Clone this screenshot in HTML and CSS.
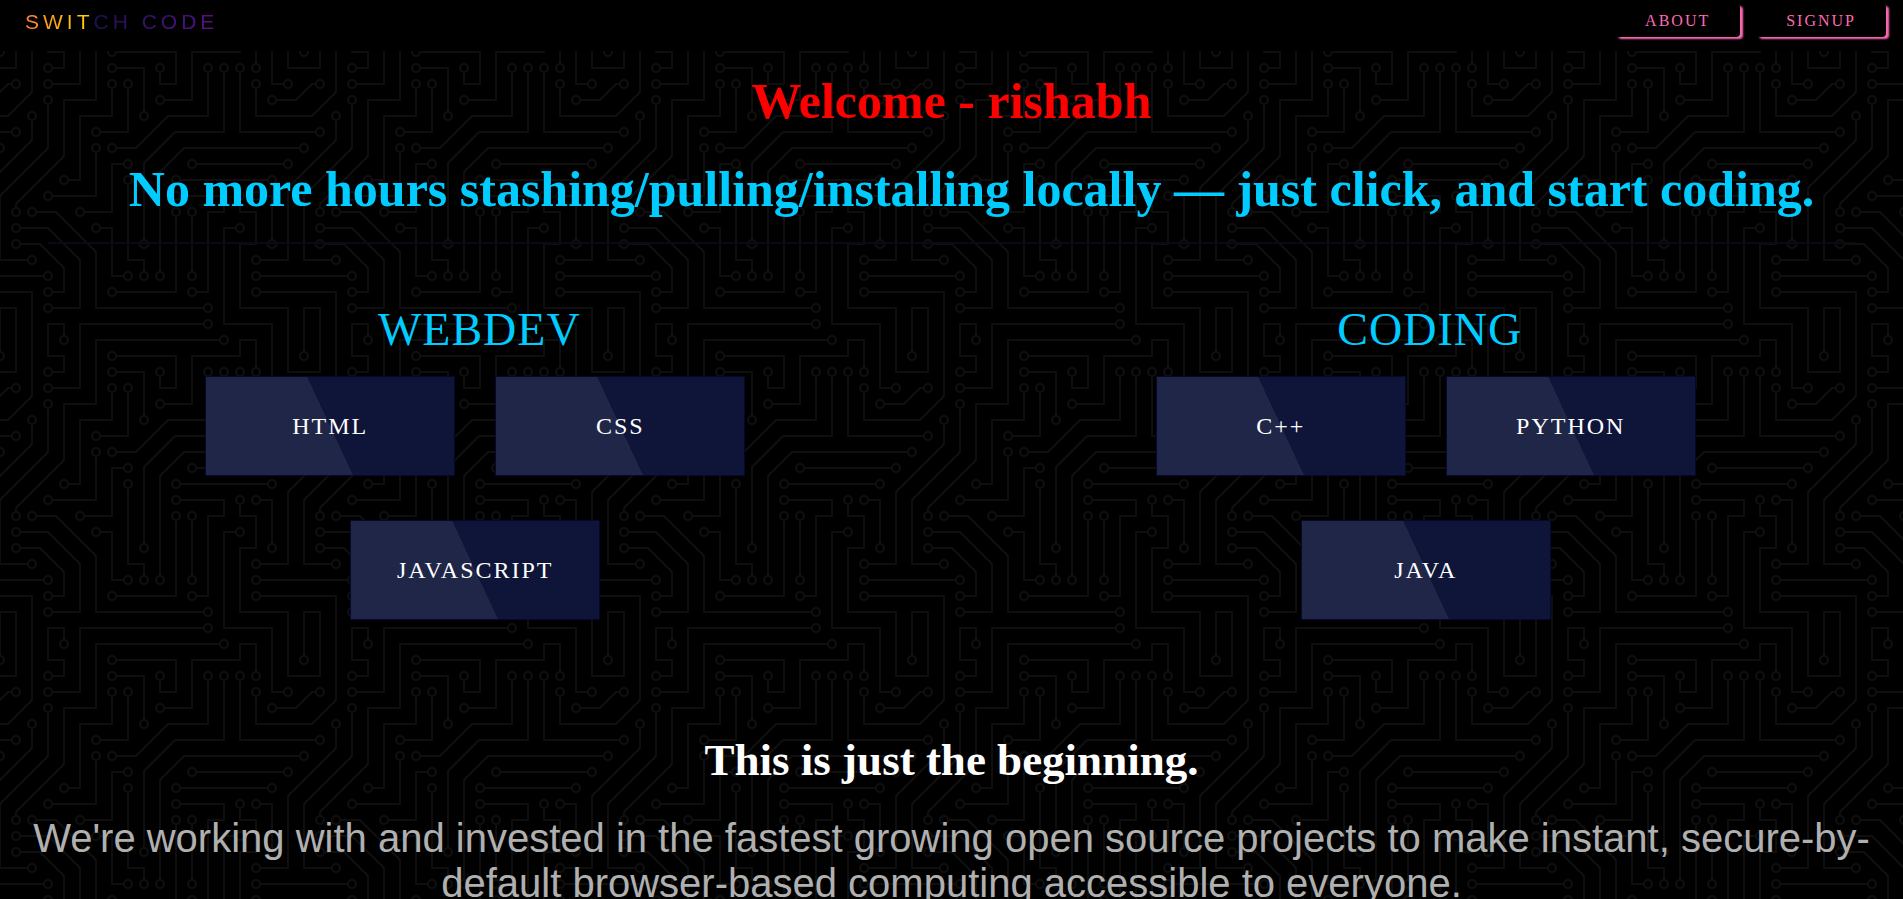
FILE: index.html
```html
<!DOCTYPE html>
<html lang="en">
<head>
<meta charset="utf-8">
<meta name="viewport" content="width=device-width, initial-scale=1">
<title>Switch Code</title>
<link rel="stylesheet" href="styles.css">
</head>
<body>
<header class="navbar">
  <a class="brand" href="#">SWITCH CODE</a>
  <nav class="nav-actions">
    <button class="neon-button" type="button">ABOUT</button>
    <button class="neon-button" type="button">SIGNUP</button>
  </nav>
</header>
<main class="board">
  <h1 class="welcome">Welcome - rishabh</h1>
  <h2 class="tagline">No more hours stashing/pulling/installing locally — just click, and start coding.</h2>
  <hr class="divider">
  <div class="tracks">
    <section class="track">
      <h3 class="track-title">WEBDEV</h3>
      <div class="track-links">
        <a class="tile" href="#">HTML</a>
        <a class="tile" href="#">CSS</a>
        <a class="tile" href="#">JAVASCRIPT</a>
      </div>
    </section>
    <section class="track">
      <h3 class="track-title">CODING</h3>
      <div class="track-links">
        <a class="tile" href="#">C++</a>
        <a class="tile" href="#">PYTHON</a>
        <a class="tile" href="#">JAVA</a>
      </div>
    </section>
  </div>
  <section class="closing">
    <h2 class="closing-title">This is just the beginning.</h2>
    <p class="closing-text">We're working with and invested in the fastest growing open source projects to make instant, secure-by-default browser-based computing accessible to everyone.</p>
  </section>
</main>
</body>
</html>
```
FILE: styles.css
```css
* {
  box-sizing: border-box;
}

html {
  background: #000;
  scrollbar-width: none;
}

body {
  margin: 0;
  color: #fff;
  font-family: "Liberation Serif", "Times New Roman", serif;
}

.navbar {
  display: flex;
  justify-content: space-between;
  align-items: flex-start;
  height: 51px;
  padding: 4px 17px 0 25px;
  background: #000;
}

.brand {
  margin-top: 6px;
  font-family: "Liberation Sans", Arial, sans-serif;
  font-size: 21px;
  line-height: 24px;
  letter-spacing: 4px;
  text-decoration: none;
  color: transparent;
  background: linear-gradient(to right, #ff7f36 0, #ffd500 66px, #1d1150 68px, #5a1088 100%);
  -webkit-background-clip: text;
  background-clip: text;
}

.nav-actions {
  display: flex;
  gap: 16px;
}

.neon-button {
  height: 33px;
  padding: 0 30px;
  border: 0;
  border-radius: 4px;
  background: #000;
  box-shadow: 3px 2px 2px #ff69b4;
  color: #ff69b4;
  font-family: inherit;
  font-size: 16px;
  letter-spacing: 2px;
}

.board {
  padding-bottom: 32px;
  text-align: center;
  background-position: -1px 0;
  background-image: url("data:image/svg+xml,%3Csvg xmlns='http://www.w3.org/2000/svg' width='304' height='304'%3E%3Cg fill='none' stroke='%230f0f0f' stroke-width='2'%3E%3Cpath d='M45 225H0M205 273H81V304M261 225H304M261 241H304M269 129H181M13 81H0M197 113H285M257 13V0M193 221V165M241 21V81H304M257 37V65H304M129 133V209H145V221M125 113H113V161H85M117 241H177V165M101 177H113V225H125M65 285V273H49V304M237 177H225V273H273V304M261 145H273V189M197 241H209V161H225V145H181M285 33H273V0M97 101V145H53M53 33H81V0M113 37V65H81V129H69M101 81H129V37M117 17H145V61M221 289H97V304M241 149V161H257V193H241V257H289V304M53 17H65V1H48M165 49H193V1H242M117 1H177V33H161V21M117 97H137L169 65H209V21M145 189V112L176 81H225V21M161 221V121L185 97H301M17 157V153L65 105V49H97V0M49 53V97L1 145V209H29M33 69V89L-1 123M13 33H9L-1 43M277 49H297L305 41M261 209H289V137L305 121M53 241H65V217L41 193H21M205 257H97V201L57 161H37M53 257H81V209L49 177H21M33 0V41L9 65H0M1 301V257H17V304M0 241H33V304M0 17H17V0M304 17H289V0M257 304V289H241V304'/%3E%3Cpath stroke-linecap='round' stroke-width='10' d='M49 225h0M209 273h0M257 225h0M257 241h0M273 129h0M177 129h0M17 81h0M193 113h0M289 113h0M257 17h0M193 225h0M193 161h0M241 17h0M257 33h0M129 129h0M145 225h0M129 113h0M81 161h0M113 241h0M177 161h0M97 177h0M129 225h0M65 289h0M241 177h0M257 145h0M273 193h0M193 241h0M177 145h0M289 33h0M97 97h0M49 145h0M49 33h0M113 33h0M65 129h0M97 81h0M129 33h0M113 17h0M145 65h0M225 289h0M241 145h0M49 17h0M161 49h0M113 1h0M113 305h0M161 17h0M113 97h0M209 17h0M145 193h0M225 17h0M161 225h0M305 97h0M1 97h0M17 161h0M49 49h0M33 209h0M33 65h0M17 33h0M273 49h0M257 209h0M49 241h0M17 193h0M209 257h0M33 161h0M49 257h0M17 177h0M1 1h0M305 1h0M1 305h0M305 305h0'/%3E%3Cpath stroke='%23000' stroke-linecap='round' stroke-width='6' d='M49 225h0M209 273h0M257 225h0M257 241h0M273 129h0M177 129h0M17 81h0M193 113h0M289 113h0M257 17h0M193 225h0M193 161h0M241 17h0M257 33h0M129 129h0M145 225h0M129 113h0M81 161h0M113 241h0M177 161h0M97 177h0M129 225h0M65 289h0M241 177h0M257 145h0M273 193h0M193 241h0M177 145h0M289 33h0M97 97h0M49 145h0M49 33h0M113 33h0M65 129h0M97 81h0M129 33h0M113 17h0M145 65h0M225 289h0M241 145h0M49 17h0M161 49h0M113 1h0M113 305h0M161 17h0M113 97h0M209 17h0M145 193h0M225 17h0M161 225h0M305 97h0M1 97h0M17 161h0M49 49h0M33 209h0M33 65h0M17 33h0M273 49h0M257 209h0M49 241h0M17 193h0M209 257h0M33 161h0M49 257h0M17 177h0M1 1h0M305 1h0M1 305h0M305 305h0'/%3E%3C/g%3E%3C/svg%3E");
}

.welcome,
.tagline {
  margin: 0;
  font-size: 50px;
  line-height: 56px;
}

.welcome {
  padding-top: 22px;
  color: #f00;
}

.tagline {
  margin-top: 32px;
  padding-left: 40px;
  color: #0cf;
}

.divider {
  height: 2px;
  margin: 25px 48px 0;
  border: 0;
  background: #0a0a12;
}

.tracks {
  display: grid;
  grid-template-columns: 1fr 1fr;
  padding-right: 2px;
}

.track-title {
  margin: 56px 0 16px;
  padding-left: 8px;
  font-size: 46px;
  font-weight: 400;
  line-height: 60px;
  letter-spacing: 1px;
  color: #0cf;
}

.track-links {
  display: flex;
  flex-wrap: wrap;
  justify-content: center;
  gap: 44px 40px;
  max-width: 620px;
  margin: 0 auto;
}

.tile {
  display: flex;
  align-items: center;
  justify-content: center;
  width: 250px;
  height: 100px;
  border: 1px solid #03082c;
  background: linear-gradient(65deg, #202648 50%, #0e1538 50%);
  color: #fff;
  font-size: 24px;
  letter-spacing: 2px;
  text-decoration: none;
}

.closing-title {
  margin: 112px 0 0;
  font-size: 45px;
  line-height: 56px;
}

.closing-text {
  margin: 28px 24px 0;
  font-family: "Liberation Sans", Arial, sans-serif;
  font-size: 40px;
  line-height: 45px;
  color: #b0b0b0;
}
```
